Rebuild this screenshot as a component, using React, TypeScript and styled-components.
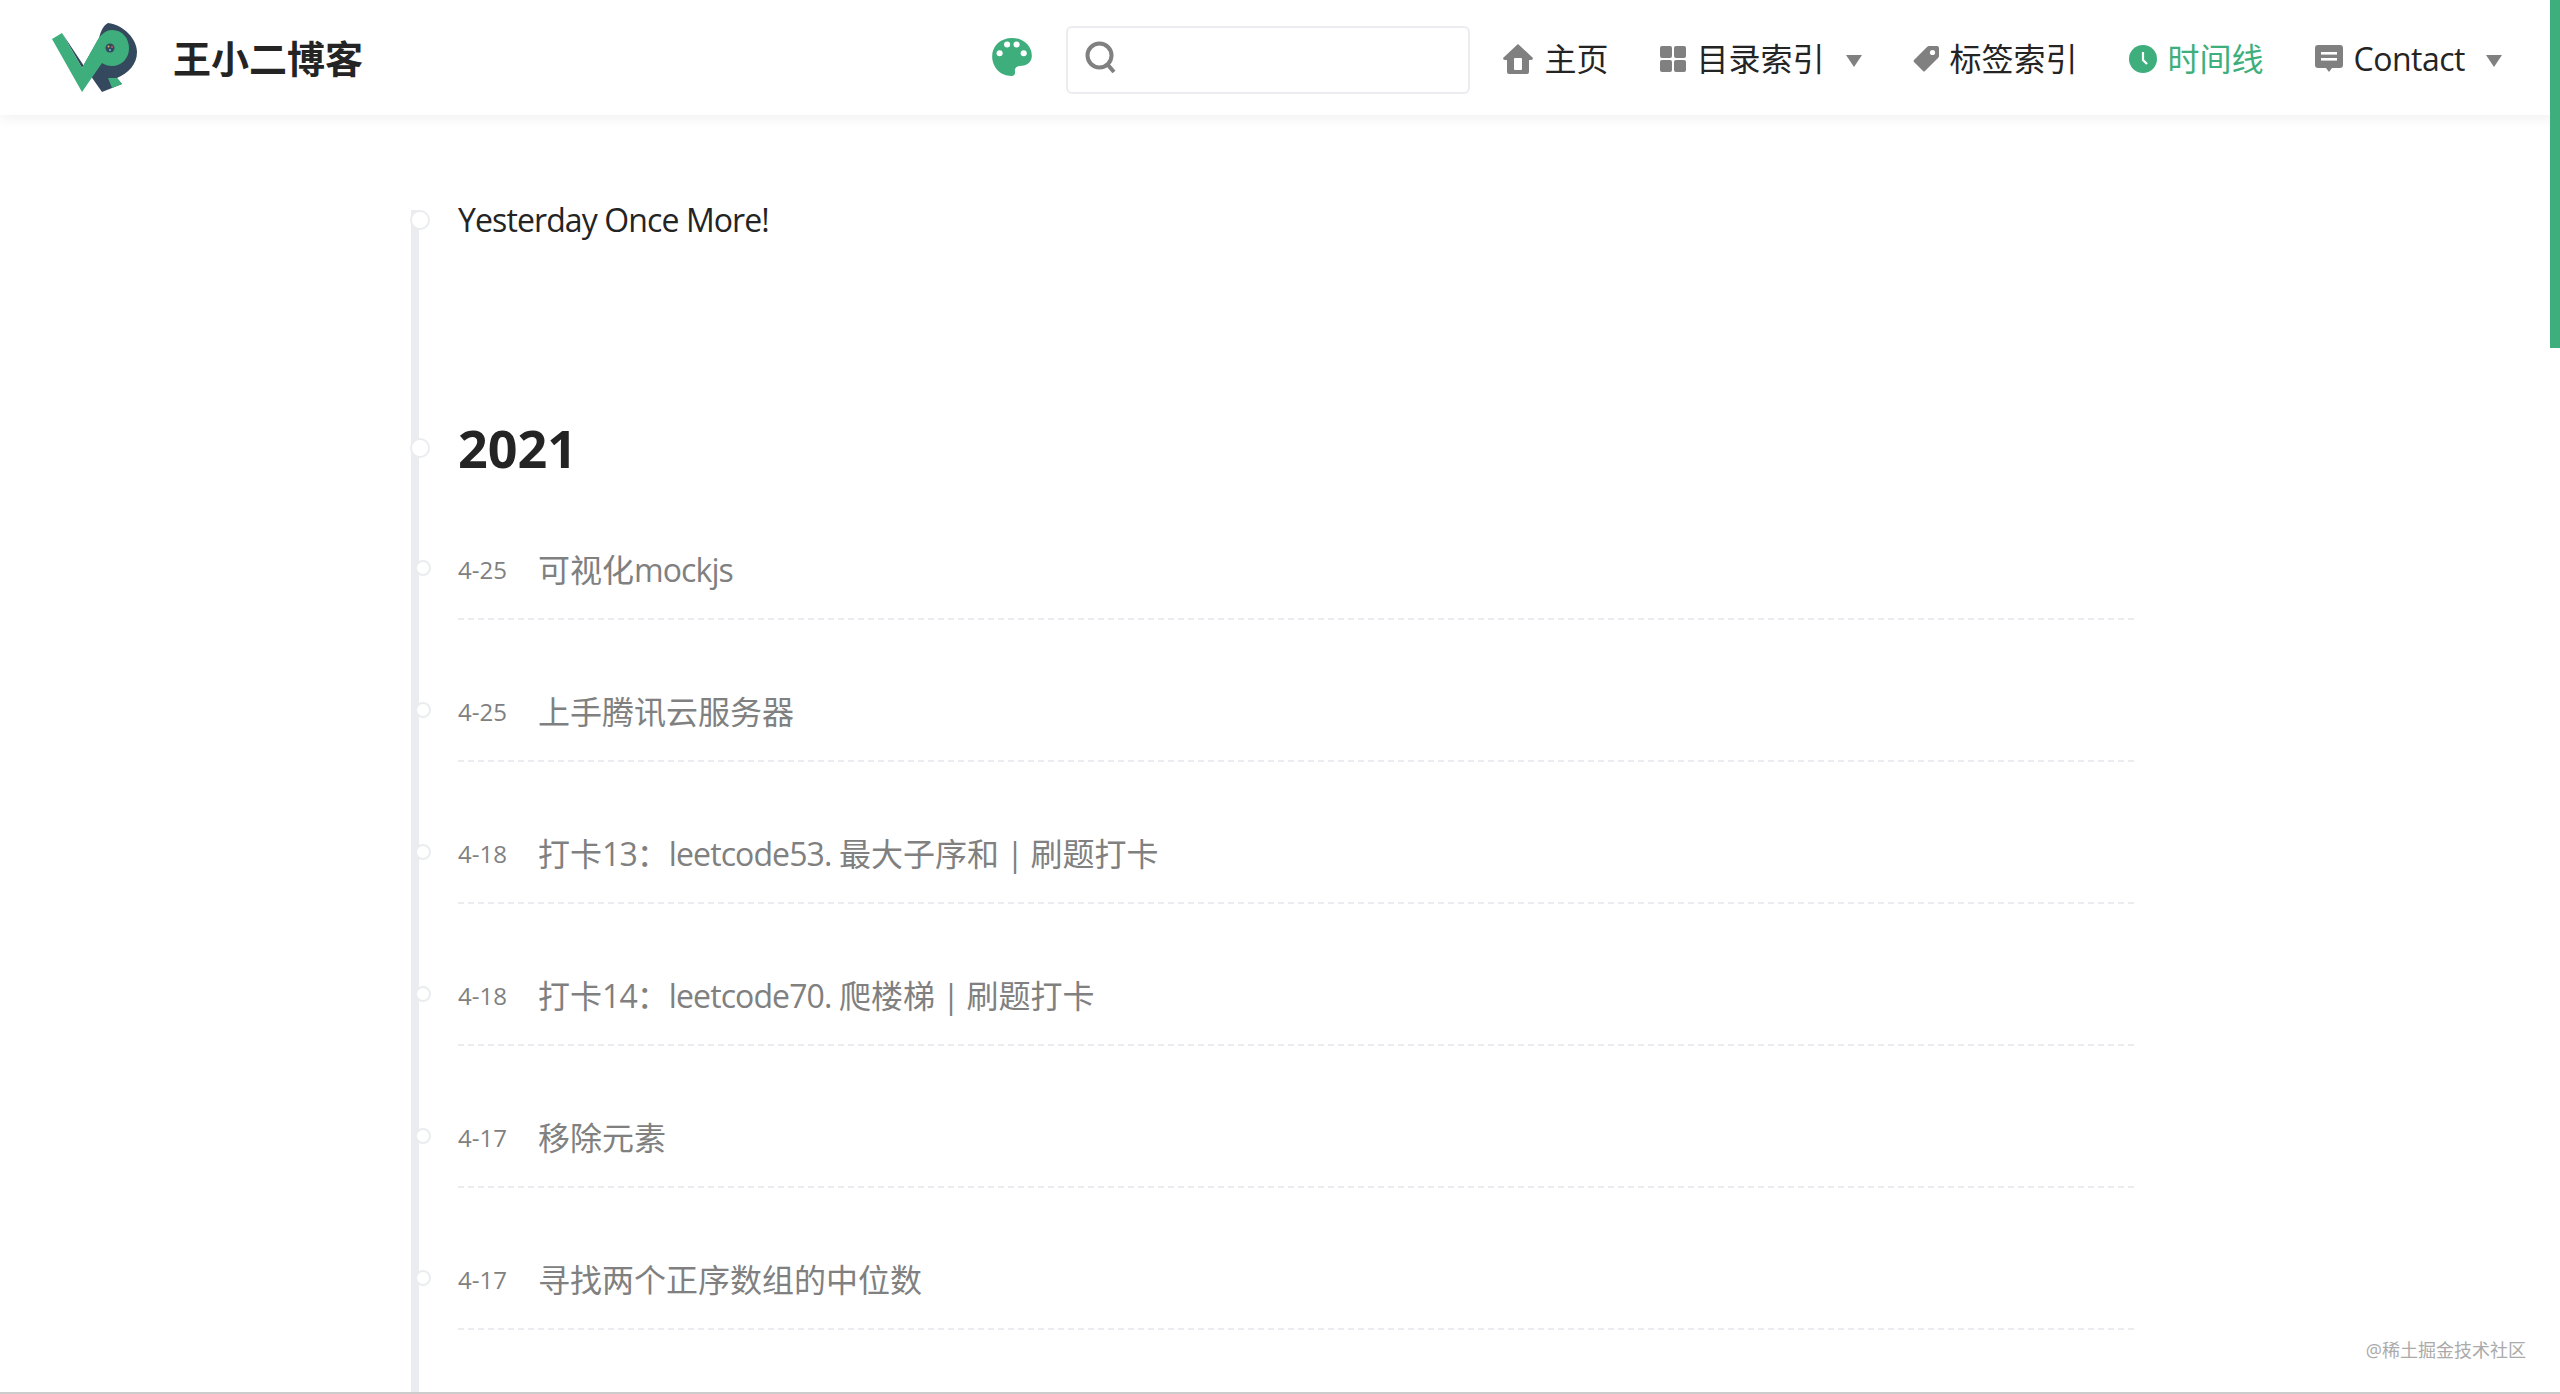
import styled, { createGlobalStyle } from 'styled-components';

const GREEN = '#3eaf7c';
const GRAY = '#808080';
const INK = '#242424';

const GlobalStyle = createGlobalStyle`
    html, body {
        margin: 0;
        padding: 0;
        background: #fff;
        overflow: hidden;
    }
    body {
        font-family: "Open Sans", "Noto Sans CJK SC", sans-serif;
        color: ${INK};
    }
`;

const posts = [
    { date: '4-25', title: '可视化mockjs' },
    { date: '4-25', title: '上手腾讯云服务器' },
    { date: '4-18', title: '打卡13：leetcode53. 最大子序和 | 刷题打卡' },
    { date: '4-18', title: '打卡14：leetcode70. 爬楼梯 | 刷题打卡' },
    { date: '4-17', title: '移除元素' },
    { date: '4-17', title: '寻找两个正序数组的中位数' },
];

// latin runs are tightened, the reference font is narrower than Open Sans
const splitLatin = (text: string) =>
    text
        .split(/([\x20-\x7e]+)/)
        .filter(Boolean)
        .map((part, i) =>
            /^[\x20-\x7e]+$/.test(part) ? <Latin key={i}>{part}</Latin> : part,
        );

const Logo = () => (
    <LogoSvg viewBox="50 20 90 75">
        <path
            d="M62 33 L82 68 L99 38 C101 30 104 25 108 23 C124 25 137 39 137 52 C137 65 128 73 117 78 L122 84 L102 92 L88 72 Z"
            fill="#34495e"
        />
        <path
            d="M52 39 L62 33 L82 68 L97 41 C101 34 106 30 112 30 C123 30 129 39 129 48 C129 59 121 66 112 66 C108 66 105 65 102 63 L82 92 Z"
            fill={GREEN}
        />
        <path d="M108 78 L117 78 L122 84 L112 88 Z" fill={GREEN} />
        <circle cx="110" cy="48" r="4.5" fill="#34495e" />
        <circle cx="108.5" cy="46.5" r="1" fill="#e0b050" />
        <circle cx="112" cy="47" r="1" fill="#d05a6e" />
        <circle cx="110" cy="50" r="1" fill="#6fc3df" />
    </LogoSvg>
);

const PaletteIcon = () => (
    <PaletteSvg viewBox="38 38 117 112">
        <path
            d="M97 38 C130 38 155 62 155 90 C155 105 145 118 125 120 C110 121 104 125 105 135 C107 145 103 150 95 150 C60 150 38 122 38 92 C38 62 62 38 97 38 Z"
            fill={GREEN}
        />
        <circle cx="60" cy="83" r="9" fill="#fff" />
        <circle cx="82" cy="57" r="9" fill="#fff" />
        <circle cx="110" cy="57" r="9" fill="#fff" />
        <circle cx="131" cy="83" r="9" fill="#fff" />
    </PaletteSvg>
);

const SearchIcon = () => (
    <SearchSvg viewBox="0 0 32 32">
        <circle cx="14.5" cy="14.5" r="12" fill="none" stroke={GRAY} strokeWidth="4" />
        <path d="M23 24 L29 31" stroke={GRAY} strokeWidth="4" fill="none" />
    </SearchSvg>
);

const HomeIcon = () => (
    <IconSvg $w={30} $h={30} viewBox="0 0 30 30">
        <path
            d="M15 0 L30 14 Q30 16 28 16 L26 16 L26 28 Q26 30 24 30 L6 30 Q4 30 4 28 L4 16 L2 16 Q0 16 0 14 Z M11 15 L11 25 Q11 26 12 26 L18 26 Q19 26 19 25 L19 15 Q19 14 18 14 L12 14 Q11 14 11 15 Z"
            fill={GRAY}
            fillRule="evenodd"
        />
    </IconSvg>
);

const GridIcon = () => (
    <IconSvg $w={26} $h={26} viewBox="0 0 26 26">
        <rect x="0" y="0" width="12" height="12" rx="2" fill={GRAY} />
        <rect x="14" y="0" width="12" height="12" rx="2" fill={GRAY} />
        <rect x="0" y="14" width="12" height="12" rx="2" fill={GRAY} />
        <rect x="14" y="14" width="12" height="12" rx="2" fill={GRAY} />
    </IconSvg>
);

const TagIcon = () => (
    <IconSvg $w={26} $h={26} viewBox="0 0 26 26">
        <path
            d="M14 1 Q15 0 16 0 L24 0 Q26 0 26 2 L26 10 Q26 11 25 12 L12 25 Q11 26 10 25 L1 16 Q0 15 1 14 Z"
            fill={GRAY}
        />
        <circle cx="19.5" cy="6.5" r="2.6" fill="#fff" />
    </IconSvg>
);

const ClockIcon = () => (
    <IconSvg $w={28} $h={28} viewBox="0 0 28 28">
        <circle cx="14" cy="14" r="14" fill={GREEN} />
        <path d="M14 7 L14 15 L18 19" fill="none" stroke="#fff" strokeWidth="2.2" />
    </IconSvg>
);

const CommentIcon = () => (
    <IconSvg $w={28} $h={28} viewBox="0 0 28 28">
        <path
            d="M3 0 L25 0 Q28 0 28 3 L28 20 Q28 23 25 23 L17 23 L14 27 L11 23 L3 23 Q0 23 0 20 L0 3 Q0 0 3 0 Z"
            fill={GRAY}
        />
        <rect x="6" y="7" width="16" height="2.6" fill="#fff" />
        <rect x="6" y="13" width="16" height="2.6" fill="#fff" />
    </IconSvg>
);

export default function App() {
    return (
        <Page>
            <GlobalStyle />
            <Navbar>
                <Brand>
                    <Logo />
                    <BrandName>王小二博客</BrandName>
                </Brand>
                <NavRight>
                    <PaletteIcon />
                    <SearchBox>
                        <SearchIcon />
                    </SearchBox>
                    <NavLinks>
                        <NavItem>
                            <HomeIcon />
                            主页
                        </NavItem>
                        <NavItem>
                            <GridIcon />
                            目录索引
                            <Caret />
                        </NavItem>
                        <NavItem>
                            <TagIcon />
                            标签索引
                        </NavItem>
                        <NavItem $active>
                            <ClockIcon />
                            时间线
                        </NavItem>
                        <NavItem>
                            <CommentIcon />
                            <ContactLabel>Contact</ContactLabel>
                            <Caret />
                        </NavItem>
                    </NavLinks>
                </NavRight>
            </Navbar>
            <Timeline>
                <Intro>Yesterday Once More!</Intro>
                <Year>2021</Year>
                {posts.map((post, i) => (
                    <PostRow key={i}>
                        <PostDate>{post.date}</PostDate>
                        <PostTitle>{splitLatin(post.title)}</PostTitle>
                    </PostRow>
                ))}
            </Timeline>
            <ScrollThumb />
            <Watermark>@稀土掘金技术社区</Watermark>
        </Page>
    );
}

const Page = styled.div`
    position: relative;
    display: flex;
    flex-direction: column;
    height: 1394px;
    box-sizing: border-box;
    border-bottom: 2px solid #ccc;
    overflow: hidden;
`;

const Navbar = styled.header`
    flex: none;
    height: 115px;
    box-sizing: border-box;
    padding: 0 58px 0 50px;
    display: flex;
    align-items: center;
    justify-content: space-between;
    background: #fff;
    box-shadow: 0 2px 14px rgba(0, 0, 0, 0.07);
`;

const Brand = styled.div`
    display: flex;
    align-items: center;
    gap: 33px;
`;

const LogoSvg = styled.svg`
    width: 90px;
    height: 75px;
`;

const BrandName = styled.span`
    font-size: 38px;
    font-weight: 700;
    margin-top: -2px;
    color: ${INK};
`;

const NavRight = styled.div`
    display: flex;
    align-items: center;
`;

const PaletteSvg = styled.svg`
    width: 40px;
    height: 38px;
    margin: -2px 34px 0 0;
`;

const SearchBox = styled.div`
    width: 404px;
    height: 68px;
    box-sizing: border-box;
    border: 2px solid #eaecef;
    border-radius: 6px;
    padding: 13px 0 0 17px;
    margin: 5px 33px 0 0;
`;

const SearchSvg = styled.svg`
    display: block;
    width: 32px;
    height: 32px;
`;

const NavLinks = styled.nav`
    display: flex;
    align-items: center;
    gap: 51px;
    margin-top: 2px;
`;

const NavItem = styled.a<{ $active?: boolean }>`
    display: flex;
    align-items: center;
    gap: 11px;
    font-size: 32px;
    line-height: 42px;
    color: ${(p) => (p.$active ? GREEN : INK)};
`;

const ContactLabel = styled.span`
    letter-spacing: -0.5px;
`;

const IconSvg = styled.svg<{ $w: number; $h: number }>`
    flex: none;
    width: ${(p) => p.$w}px;
    height: ${(p) => p.$h}px;
`;

const Caret = styled.span`
    width: 0;
    height: 0;
    margin-left: 10px;
    margin-top: 4px;
    border-left: 8px solid transparent;
    border-right: 8px solid transparent;
    border-top: 12px solid ${GRAY};
`;

const Latin = styled.span`
    letter-spacing: -0.9px;
`;

const Timeline = styled.main`
    flex: 1;
    width: 1723px;
    box-sizing: border-box;
    margin: 95px 0 0 411px;
    padding-left: 39px;
    border-left: 8px solid #eaecef;
`;

const Dot = styled.div`
    position: relative;
    &::before {
        content: '';
        position: absolute;
        box-sizing: border-box;
        left: -48px;
        top: 0;
        width: 20px;
        height: 20px;
        border-radius: 50%;
        background: #fff;
        border: 2px solid #eaecef;
    }
`;

const Intro = styled(Dot)`
    height: 20px;
    line-height: 20px;
    font-size: 32px;
    letter-spacing: -0.9px;
    color: ${INK};
    margin-bottom: 187px;
`;

const Year = styled(Dot)`
    height: 61px;
    line-height: 61px;
    font-size: 52px;
    font-weight: 700;
    color: ${INK};
    &::before {
        top: 21px;
    }
`;

const PostRow = styled(Dot)`
    display: flex;
    align-items: center;
    height: 142px;
    box-sizing: border-box;
    padding: 71px 0 27px;
    border-bottom: 2px dashed #eaecef;
    &::before {
        left: -43px;
        top: 82px;
        width: 16px;
        height: 16px;
    }
`;

const PostDate = styled.span`
    width: 80px;
    flex: none;
    margin-top: -2px;
    font-size: 24px;
    color: ${GRAY};
`;

const PostTitle = styled.span`
    font-size: 32px;
    line-height: 42px;
    color: ${GRAY};
`;

const ScrollThumb = styled.div`
    position: absolute;
    top: 0;
    right: 0;
    width: 10px;
    height: 348px;
    background: ${GREEN};
`;

const Watermark = styled.div`
    position: absolute;
    right: 34px;
    bottom: 30px;
    font-size: 18px;
    line-height: 24px;
    color: #aaa;
`;
